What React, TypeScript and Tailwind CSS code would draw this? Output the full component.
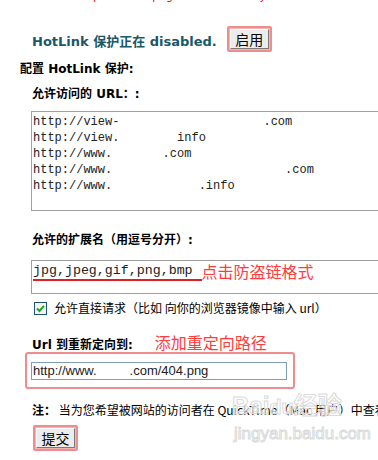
import React from "react";

const sans = { fontFamily: '"DejaVu Sans", Verdana, "Noto Sans CJK SC", sans-serif' };

function XPButton({ label }: { label: string }) {
  return (
    <div className="inline-flex rounded-[2px] border-2 border-[#f08c8c] p-[1px] bg-[#f4b4b4]">
      <div className="flex items-center justify-center border border-t-white border-l-white border-b-[#7a7a7a] border-r-[#7a7a7a] bg-[#ececec] h-[20px] w-[39px] text-[14px] text-black leading-none whitespace-nowrap" style={{ fontFamily: '"Noto Sans CJK SC", sans-serif' }}>
        {label}
      </div>
    </div>
  );
}

export default function App() {
  const urls = [
    "http://view-                    .com",
    "http://view.        info",
    "http://www.       .com",
    "http://www.                        .com",
    "http://www.            .info",
  ];
  return (
    <div className="relative w-[378px] h-[460px] overflow-hidden bg-white text-black" style={sans}>
      <div className="pl-[32px] mt-[-10px] h-[13px] text-[11px] leading-[13px] text-[#ff0000] whitespace-nowrap">
        it will corrupt the webpage extensions in your account.
      </div>

      <div className="flex items-end mt-[21px] pl-[32px] h-[28px]">
        <span className="mb-[2px] text-[13px] leading-[16px] font-bold text-[#195868] whitespace-nowrap">
          HotLink 保护正在 disabled.
        </span>
        <div className="ml-[10px]">
          <XPButton label="启用" />
        </div>
      </div>

      <div className="mt-[10px] pl-[20px] text-[12px] leading-[14px] font-bold whitespace-nowrap">
        配置 HotLink 保护:
      </div>

      <div className="mt-[11px] pl-[32px] text-[12px] leading-[14px] font-bold whitespace-nowrap">
        允许访问的 URL：:
      </div>

      <div className="mt-[10px] ml-[31px] w-[360px] h-[100px] border border-[#a0a0a0] pt-[2px] pl-[1px]">
        {urls.map((u, i) => (
          <div key={i} className="text-[12px] leading-[16px] whitespace-pre text-[#222]" style={{ fontFamily: '"Liberation Mono", "Courier New", monospace' }}>
            {u}
          </div>
        ))}
      </div>

      <div className="mt-[22px] pl-[32px] text-[12px] leading-[14px] font-bold whitespace-nowrap">
        允许的扩展名（用逗号分开）:
      </div>

      <div className="mt-[13px] ml-[31px] w-[360px] h-[34px] border border-[#a0a0a0] pl-[1px] pt-[1px]">
        <div className="flex items-start">
          <span className="border-b-2 border-[#e02020] pr-[9px] text-[13.3px] leading-[17px] whitespace-pre text-[#222]" style={{ fontFamily: '"Liberation Mono", "Courier New", monospace' }}>
            jpg,jpeg,gif,png,bmp
          </span>
          <span className="text-[16px] leading-[19px] text-[#ff3b3b] whitespace-nowrap" style={{ fontFamily: '"Noto Sans CJK SC", sans-serif' }}>
            点击防盗链格式
          </span>
        </div>
      </div>

      <div className="mt-[7px] flex items-center pl-[34px]">
        <div className="flex items-center justify-center w-[13px] h-[13px] border border-[#1c5180] bg-[#f4f4f0]">
          <svg width="9" height="9" viewBox="0 0 9 9">
            <path d="M1 4.5 L3.5 7 L8 1.8" fill="none" stroke="#21a121" strokeWidth="2" />
          </svg>
        </div>
        <span className="ml-[7px] text-[12px] leading-[14px] whitespace-nowrap" style={{ fontFamily: '"Noto Sans CJK SC", "DejaVu Sans", sans-serif' }}>
          允许直接请求（比如 向你的浏览器镜像中输入 url）
        </span>
      </div>

      <div className="mt-[18px] flex items-end pl-[32px]">
        <span className="text-[12px] leading-[14px] font-bold whitespace-nowrap">Url 到重新定向到:</span>
        <span className="ml-[22px] text-[16px] leading-[19px] text-[#ff3b3b] whitespace-nowrap" style={{ fontFamily: '"Noto Sans CJK SC", sans-serif' }}>
          添加重定向路径
        </span>
      </div>

      <div className="mt-[0px] ml-[25px] w-[270px] h-[37px] rounded-[3px] border-2 border-[#f08c8c] pl-[4px] pt-[8px]">
        <div className="w-[256px] h-[18px] border border-[#7f9db9] flex items-center pl-[1px] text-[13px] leading-[16px] text-[#222] whitespace-nowrap" style={{ fontFamily: '"Liberation Sans", Arial, sans-serif' }}>
          <span>http://www.</span>
          <span className="inline-block w-[33px]" />
          <span>.com/404.png</span>
        </div>
      </div>

      <div className="mt-[14px] pl-[32px] text-[12px] leading-[14px] whitespace-nowrap">
        <span className="font-bold">注：</span>
        <span style={{ fontFamily: '"Noto Sans CJK SC", "DejaVu Sans", sans-serif' }}> 当为您希望被网站的访问者在 QuickTime（Mac 用户）中查看</span>
      </div>

      <div className="mt-[7px] pl-[33px]">
        <XPButton label="提交" />
      </div>

      <div className="pointer-events-none absolute left-[232px] top-[392px] text-[24px] font-bold leading-[28px] text-white/60 [-webkit-text-stroke:1px_#dadada] whitespace-nowrap" style={{ fontFamily: '"Liberation Sans", "Noto Sans CJK SC", sans-serif' }}>
        Bai<span className="text-[20px]">du</span>经验
      </div>
      <div className="pointer-events-none absolute left-[234px] top-[424px] text-[17px] leading-[20px] text-white [-webkit-text-stroke:1px_#dadada] whitespace-nowrap" style={{ fontFamily: '"Liberation Sans", sans-serif' }}>
        jingyan.baidu.com
      </div>
    </div>
  );
}
